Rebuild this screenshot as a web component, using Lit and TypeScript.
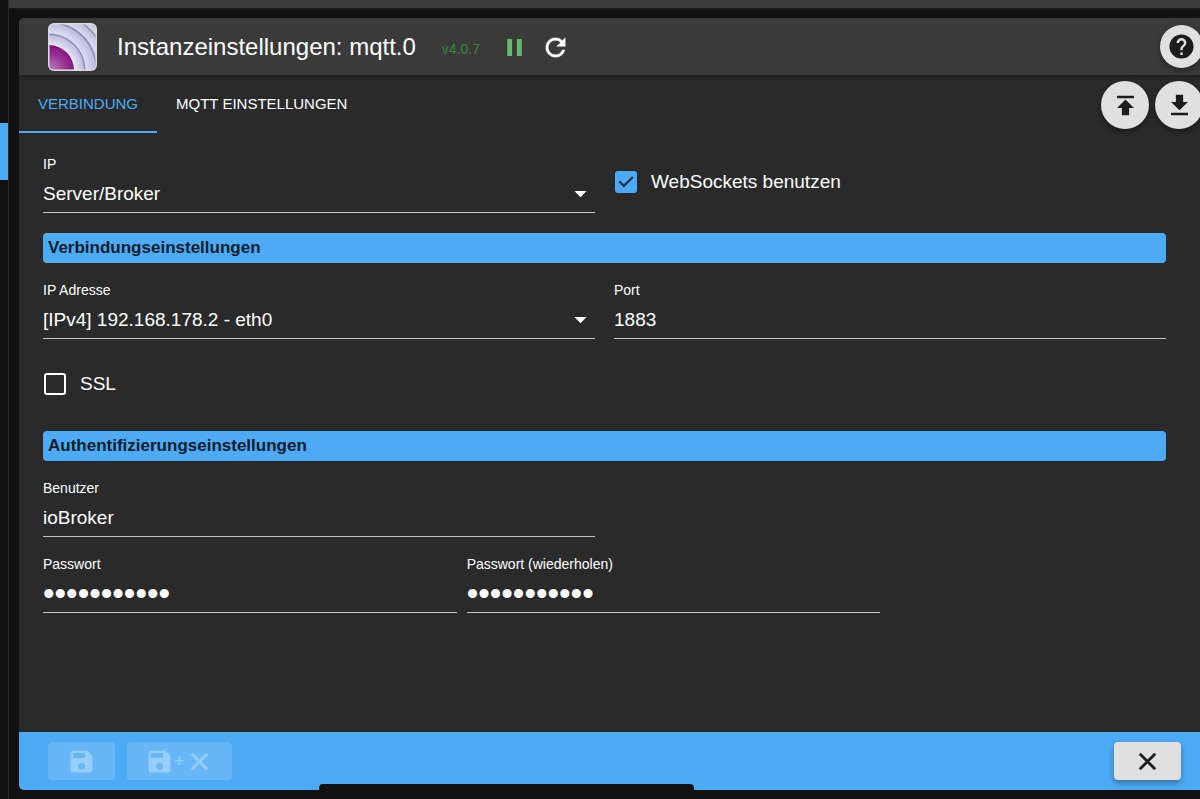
import { LitElement, html, css, svg } from "lit";
import { customElement, property, state } from "lit/decorators.js";

const ICONS: Record<string, string> = {
  pause: "M6 19h4V5H6v14zm8-14v14h4V5h-4z",
  refresh:
    "M17.65 6.35C16.2 4.9 14.21 4 12 4c-4.42 0-7.99 3.58-7.99 8s3.57 8 7.99 8c3.73 0 6.84-2.55 7.73-6h-2.08c-.82 2.33-3.04 4-5.65 4-3.31 0-6-2.69-6-6s2.69-6 6-6c1.66 0 3.14.69 4.22 1.78L13 11h7V4l-2.35 2.35z",
  help: "M12 2C6.48 2 2 6.48 2 12s4.48 10 10 10 10-4.48 10-10S17.52 2 12 2zm1 17h-2v-2h2v2zm2.07-7.75l-.9.92C13.45 12.9 13 13.5 13 15h-2v-.5c0-1.1.45-2.1 1.17-2.83l1.24-1.26c.37-.36.59-.86.59-1.41 0-1.1-.9-2-2-2s-2 .9-2 2H8c0-2.21 1.79-4 4-4s4 1.79 4 4c0 .88-.36 1.68-.93 2.25z",
  upload: "M5 4v2h14V4H5zm0 10h4v6h6v-6h4l-7-7-7 7z",
  download: "M19 9h-4V3H9v6H5l7 7 7-7zM5 18v2h14v-2H5z",
  save: "M17 3H5c-1.11 0-2 .9-2 2v14c0 1.1.89 2 2 2h14c1.1 0 2-.9 2-2V7l-4-4zm-5 16c-1.66 0-3-1.34-3-3s1.34-3 3-3 3 1.34 3 3-1.34 3-3 3zm3-10H5V5h10v4z",
  close:
    "M19 6.41L17.59 5 12 10.59 6.41 5 5 6.41 10.59 12 5 17.59 6.41 19 12 13.41 17.59 19 19 17.59 13.41 12z",
  arrow: "M7 10l5 5 5-5z",
  check: "M10 17l-5-5 1.41-1.41L10 14.17l7.59-7.59L19 8z",
};

@customElement("mui-icon")
class MuiIcon extends LitElement {
  @property() name = "";
  static styles = css`
    :host { display: inline-flex; width: 29px; height: 29px; flex: none; }
    svg { width: 100%; height: 100%; fill: currentColor; }
    .bold { stroke: currentColor; stroke-width: 0.4; }
  `;
  render() {
    const bold = this.name === "refresh" || this.name === "close" ? "bold" : "";
    return html`<svg class=${bold} viewBox="0 0 24 24" aria-hidden="true">${svg`<path d=${ICONS[this.name]}></path>`}</svg>`;
  }
}

@customElement("app-root")
class AppRoot extends LitElement {
  @state() private tab = 0;

  static styles = css`
    :host {
      display: grid;
      grid-template-columns: 8px 1fr;
      height: 100vh;
      overflow: hidden;
      background: #111;
      color: #fff;
      font-family: "Liberation Sans", Arial, Helvetica, sans-serif;
      font-size: 19px;
    }
    * { box-sizing: border-box; }
    button, input, select { font: inherit; color: inherit; margin: 0; padding: 0; border: 0; background: none; outline: none; }
    .rail { padding-top: 123px; }
    .rail-active { height: 57px; background: #4dabf5; }
    .stage { display: flex; flex-direction: column; min-width: 0; border-left: 1px solid #2a2a2a; }
    .topbar { height: 9px; flex: none; background: #3c3c3c; border-bottom: 1px solid #1c1c1c; }
    .dialog {
      position: relative;
      flex: 1;
      display: flex;
      flex-direction: column;
      margin: 9px -24px 9px 10px;
      border-radius: 5px;
      background: #2a2a2a;
      overflow: hidden;
    }
    .header {
      display: flex;
      align-items: center;
      height: 57px;
      flex: none;
      padding: 0 21px 0 29px;
      background: #3a3a3a;
      box-shadow: 0 2px 5px rgba(0, 0, 0, 0.3);
    }
    .logo { width: 49px; height: 48px; flex: none; }
    .title { margin: 0 26px 0 20px; font-size: 24px; line-height: 32px; font-weight: 400; white-space: nowrap; }
    .version { font-size: 14px; line-height: 20px; padding-top: 4px; color: #2f8d37; }
    .state { display: flex; gap: 12px; height: 29px; margin: 2px 0 0 20px; }
    .state button { display: flex; }
    .pause { color: #66bb6a; }
    .round {
      display: flex;
      align-items: center;
      justify-content: center;
      width: 48px;
      height: 48px;
      flex: none;
      border-radius: 50%;
      background: #e0e0e0;
      color: #1c1c1c;
      box-shadow: 0 3px 6px rgba(0, 0, 0, 0.4);
    }
    .round.small { width: 43px; height: 43px; margin-left: auto; }
    .tabs { display: flex; align-items: center; height: 58px; flex: none; padding-right: 21px; }
    .tab { height: 100%; padding: 0 19px; font-size: 15px; text-transform: uppercase; border-bottom: 2px solid transparent; }
    .tab.active { color: #4dabf5; border-color: #4dabf5; }
    .actions { display: flex; gap: 6px; margin-left: auto; padding-top: 2px; }
    .form { flex: 1; padding: 21px 58px 20px 24px; }
    .row { display: grid; gap: 19px; grid-template-columns: 1fr 1fr; }
    .row.three { gap: 10px; grid-template-columns: 3fr 3fr 2fr; }
    .row + .row { margin-top: 17px; }
    .section {
      margin: 20px 0 17px;
      padding: 0 5px;
      border-radius: 4px;
      background: #4dabf5;
      color: #0b1c2c;
      font-size: 17px;
      line-height: 30px;
      font-weight: 700;
    }
    .field { display: flex; flex-direction: column; min-width: 0; }
    .label { font-size: 14px; line-height: 20px; }
    .box { display: grid; align-items: center; border-bottom: 1px solid #c4c4c4; }
    .control { grid-area: 1 / 1; width: 100%; height: 38px; border-radius: 0; appearance: none; }
    input.control { padding-top: 2px; }
    .control.secret { font-size: 33px; }
    .control option { background: #2a2a2a; }
    .caret { grid-area: 1 / 1; justify-self: end; pointer-events: none; }
    .check { display: flex; align-items: center; gap: 14px; padding: 0 1px; height: 55px; }
    .tick { display: grid; grid-template: 22px / 22px; place-content: center; place-items: center; }
    .tick input { grid-area: 1 / 1; appearance: none; width: 22px; height: 22px; border: 2px solid #fff; border-radius: 3px; }
    .tick input:checked { background: #4dabf5; border-color: #4dabf5; }
    .tick mui-icon { grid-area: 1 / 1; width: 26px; height: 26px; color: #16334d; pointer-events: none; visibility: hidden; }
    .tick input:checked + mui-icon { visibility: visible; }
    .footer {
      display: flex;
      align-items: center;
      gap: 12px;
      height: 58px;
      flex: none;
      padding: 0 43px 0 29px;
      background: #4dabf5;
    }
    .btn {
      display: flex;
      align-items: center;
      justify-content: center;
      height: 38px;
      min-width: 67px;
      padding: 0 18px;
      border-radius: 4px;
      background: #e0e0e0;
      color: #1c1c1c;
      box-shadow: 0 3px 6px rgba(0, 0, 0, 0.35);
    }
    .btn:disabled { background: #67b6f7; color: #98cefa; box-shadow: none; }
    .btn .plus { font-size: 18px; }
    .btn.last { margin-left: auto; }
    .home {
      position: absolute;
      left: 300px;
      bottom: 0;
      width: 375px;
      height: 6px;
      border-radius: 4px 4px 0 0;
      background: #111;
    }
  `;

  private select(id: string, label: string, value: string) {
    return html`<div class="field">
      <label class="label" for=${id}>${label}</label>
      <div class="box">
        <select class="control" id=${id}><option>${value}</option></select>
        <mui-icon class="caret" name="arrow"></mui-icon>
      </div>
    </div>`;
  }

  private input(id: string, label: string, value: string, type = "text") {
    return html`<div class="field">
      <label class="label" for=${id}>${label}</label>
      <div class="box">
        <input class="control ${type === "password" ? "secret" : ""}" id=${id} type=${type} .value=${value} />
      </div>
    </div>`;
  }

  private checkbox(id: string, label: string, checked: boolean) {
    return html`<label class="check" for=${id}>
      <span class="tick"><input type="checkbox" id=${id} ?checked=${checked} /><mui-icon name="check"></mui-icon></span>
      <span>${label}</span>
    </label>`;
  }

  private logo() {
    return html`<svg class="logo" viewBox="0 0 49 48" aria-hidden="true">
      <defs>
        <clipPath id="c"><rect x="1.5" y="1.5" width="46" height="45" rx="4"></rect></clipPath>
        <radialGradient id="b" gradientUnits="userSpaceOnUse" cx="4" cy="46" r="24">
          <stop offset="0" stop-color="#b878b8"></stop><stop offset="0.5" stop-color="#9c3a98"></stop><stop offset="1" stop-color="#80107d"></stop>
        </radialGradient>
        <radialGradient id="w" gradientUnits="userSpaceOnUse" cx="1" cy="47" r="66">
          <stop offset="0.38" stop-color="#f2f0fa"></stop>
          <stop offset="0.43" stop-color="#d6d6ee"></stop>
          <stop offset="0.52" stop-color="#c0c1e2"></stop>
          <stop offset="0.54" stop-color="#8486b0"></stop>
          <stop offset="0.56" stop-color="#dcdcf0"></stop>
          <stop offset="0.7" stop-color="#bcbde0"></stop>
          <stop offset="0.72" stop-color="#8082ae"></stop>
          <stop offset="0.745" stop-color="#dadaef"></stop>
          <stop offset="0.85" stop-color="#c2c3e2"></stop>
          <stop offset="0.87" stop-color="#8a8cb6"></stop>
          <stop offset="0.895" stop-color="#dcdcee"></stop>
          <stop offset="1" stop-color="#b4b5d4"></stop>
        </radialGradient>
      </defs>
      <rect width="49" height="48" rx="6" fill="#dcd9e4"></rect>
      <g clip-path="url(#c)">
        <rect width="49" height="48" fill="url(#w)"></rect>
        <circle cx="1" cy="47" r="25" fill="url(#b)"></circle>
      </g>
    </svg>`;
  }

  render() {
    return html`
      <div class="rail"><div class="rail-active"></div></div>
      <div class="stage">
        <div class="topbar"></div>
        <main class="dialog">
          <header class="header">
            ${this.logo()}
            <h1 class="title">Instanzeinstellungen: mqtt.0</h1>
            <span class="version">v4.0.7</span>
            <div class="state">
              <button class="pause" aria-label="Pause"><mui-icon name="pause"></mui-icon></button>
              <button aria-label="Neustart"><mui-icon name="refresh"></mui-icon></button>
            </div>
            <button class="round small" aria-label="Hilfe"><mui-icon name="help"></mui-icon></button>
          </header>
          <nav class="tabs">
            ${["Verbindung", "MQTT Einstellungen"].map(
              (t, i) => html`<button class="tab ${this.tab === i ? "active" : ""}" @click=${() => (this.tab = i)}>${t}</button>`
            )}
            <div class="actions">
              <button class="round" aria-label="Hochladen"><mui-icon name="upload"></mui-icon></button>
              <button class="round" aria-label="Herunterladen"><mui-icon name="download"></mui-icon></button>
            </div>
          </nav>
          <form class="form" @submit=${(e: Event) => e.preventDefault()}>
            <div class="row">
              ${this.select("mode", "IP", "Server/Broker")} ${this.checkbox("ws", "WebSockets benutzen", true)}
            </div>
            <h2 class="section">Verbindungseinstellungen</h2>
            <div class="row">
              ${this.select("bind", "IP Adresse", "[IPv4] 192.168.178.2 - eth0")} ${this.input("port", "Port", "1883")}
            </div>
            <div class="row">${this.checkbox("ssl", "SSL", false)}</div>
            <h2 class="section">Authentifizierungseinstellungen</h2>
            <div class="row">${this.input("user", "Benutzer", "ioBroker")}</div>
            <div class="row three">
              ${this.input("pass", "Passwort", "12345678901", "password")}
              ${this.input("pass2", "Passwort (wiederholen)", "12345678901", "password")}
            </div>
          </form>
          <footer class="footer">
            <button class="btn" disabled aria-label="Speichern"><mui-icon name="save"></mui-icon></button>
            <button class="btn" disabled aria-label="Speichern und schließen">
              <mui-icon name="save"></mui-icon><span class="plus">+</span><mui-icon name="close"></mui-icon>
            </button>
            <button class="btn last" aria-label="Schließen"><mui-icon name="close"></mui-icon></button>
          </footer>
          <div class="home"></div>
        </main>
      </div>
    `;
  }
}
